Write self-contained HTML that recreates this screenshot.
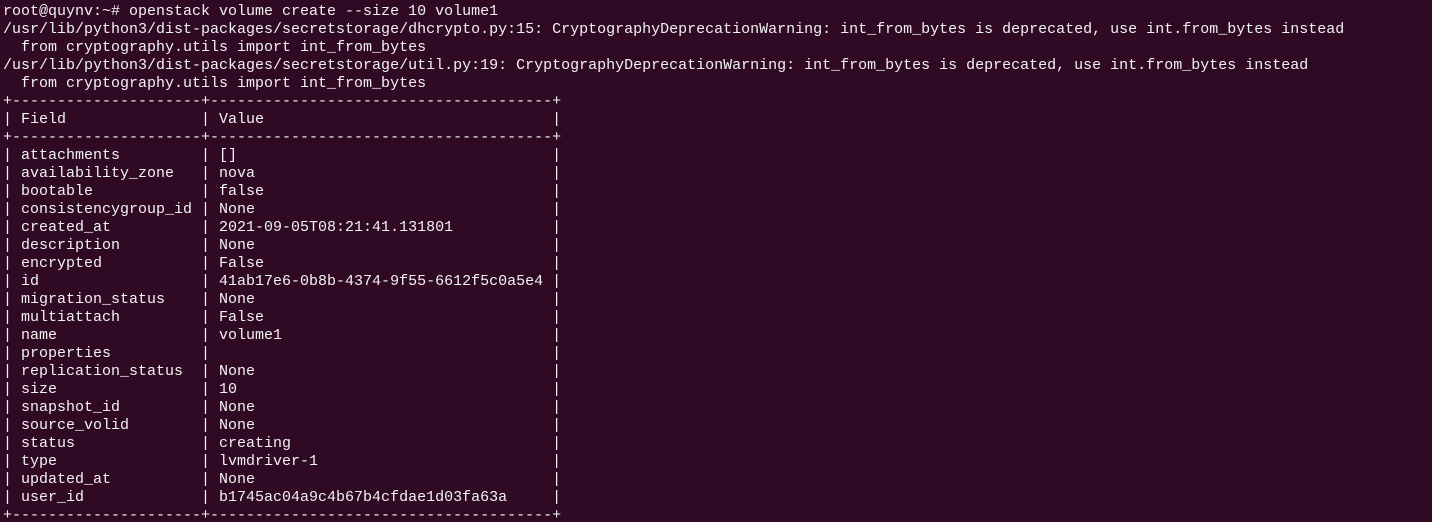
<!DOCTYPE html>
<html><head><meta charset="utf-8"><style>
html,body{margin:0;padding:0;background:#300a24;width:1432px;height:522px;overflow:hidden}
pre{margin:0;padding:3px 0 0 3px;font-family:"Liberation Mono","DejaVu Sans Mono",monospace;font-size:15px;line-height:18px;color:#f2f2f2}
</style></head><body><pre>root@quynv:~# openstack volume create --size 10 volume1
/usr/lib/python3/dist-packages/secretstorage/dhcrypto.py:15: CryptographyDeprecationWarning: int_from_bytes is deprecated, use int.from_bytes instead
  from cryptography.utils import int_from_bytes
/usr/lib/python3/dist-packages/secretstorage/util.py:19: CryptographyDeprecationWarning: int_from_bytes is deprecated, use int.from_bytes instead
  from cryptography.utils import int_from_bytes
+---------------------+--------------------------------------+
| Field               | Value                                |
+---------------------+--------------------------------------+
| attachments         | []                                   |
| availability_zone   | nova                                 |
| bootable            | false                                |
| consistencygroup_id | None                                 |
| created_at          | 2021-09-05T08:21:41.131801           |
| description         | None                                 |
| encrypted           | False                                |
| id                  | 41ab17e6-0b8b-4374-9f55-6612f5c0a5e4 |
| migration_status    | None                                 |
| multiattach         | False                                |
| name                | volume1                              |
| properties          |                                      |
| replication_status  | None                                 |
| size                | 10                                   |
| snapshot_id         | None                                 |
| source_volid        | None                                 |
| status              | creating                             |
| type                | lvmdriver-1                          |
| updated_at          | None                                 |
| user_id             | b1745ac04a9c4b67b4cfdae1d03fa63a     |
+---------------------+--------------------------------------+
</pre></body></html>
